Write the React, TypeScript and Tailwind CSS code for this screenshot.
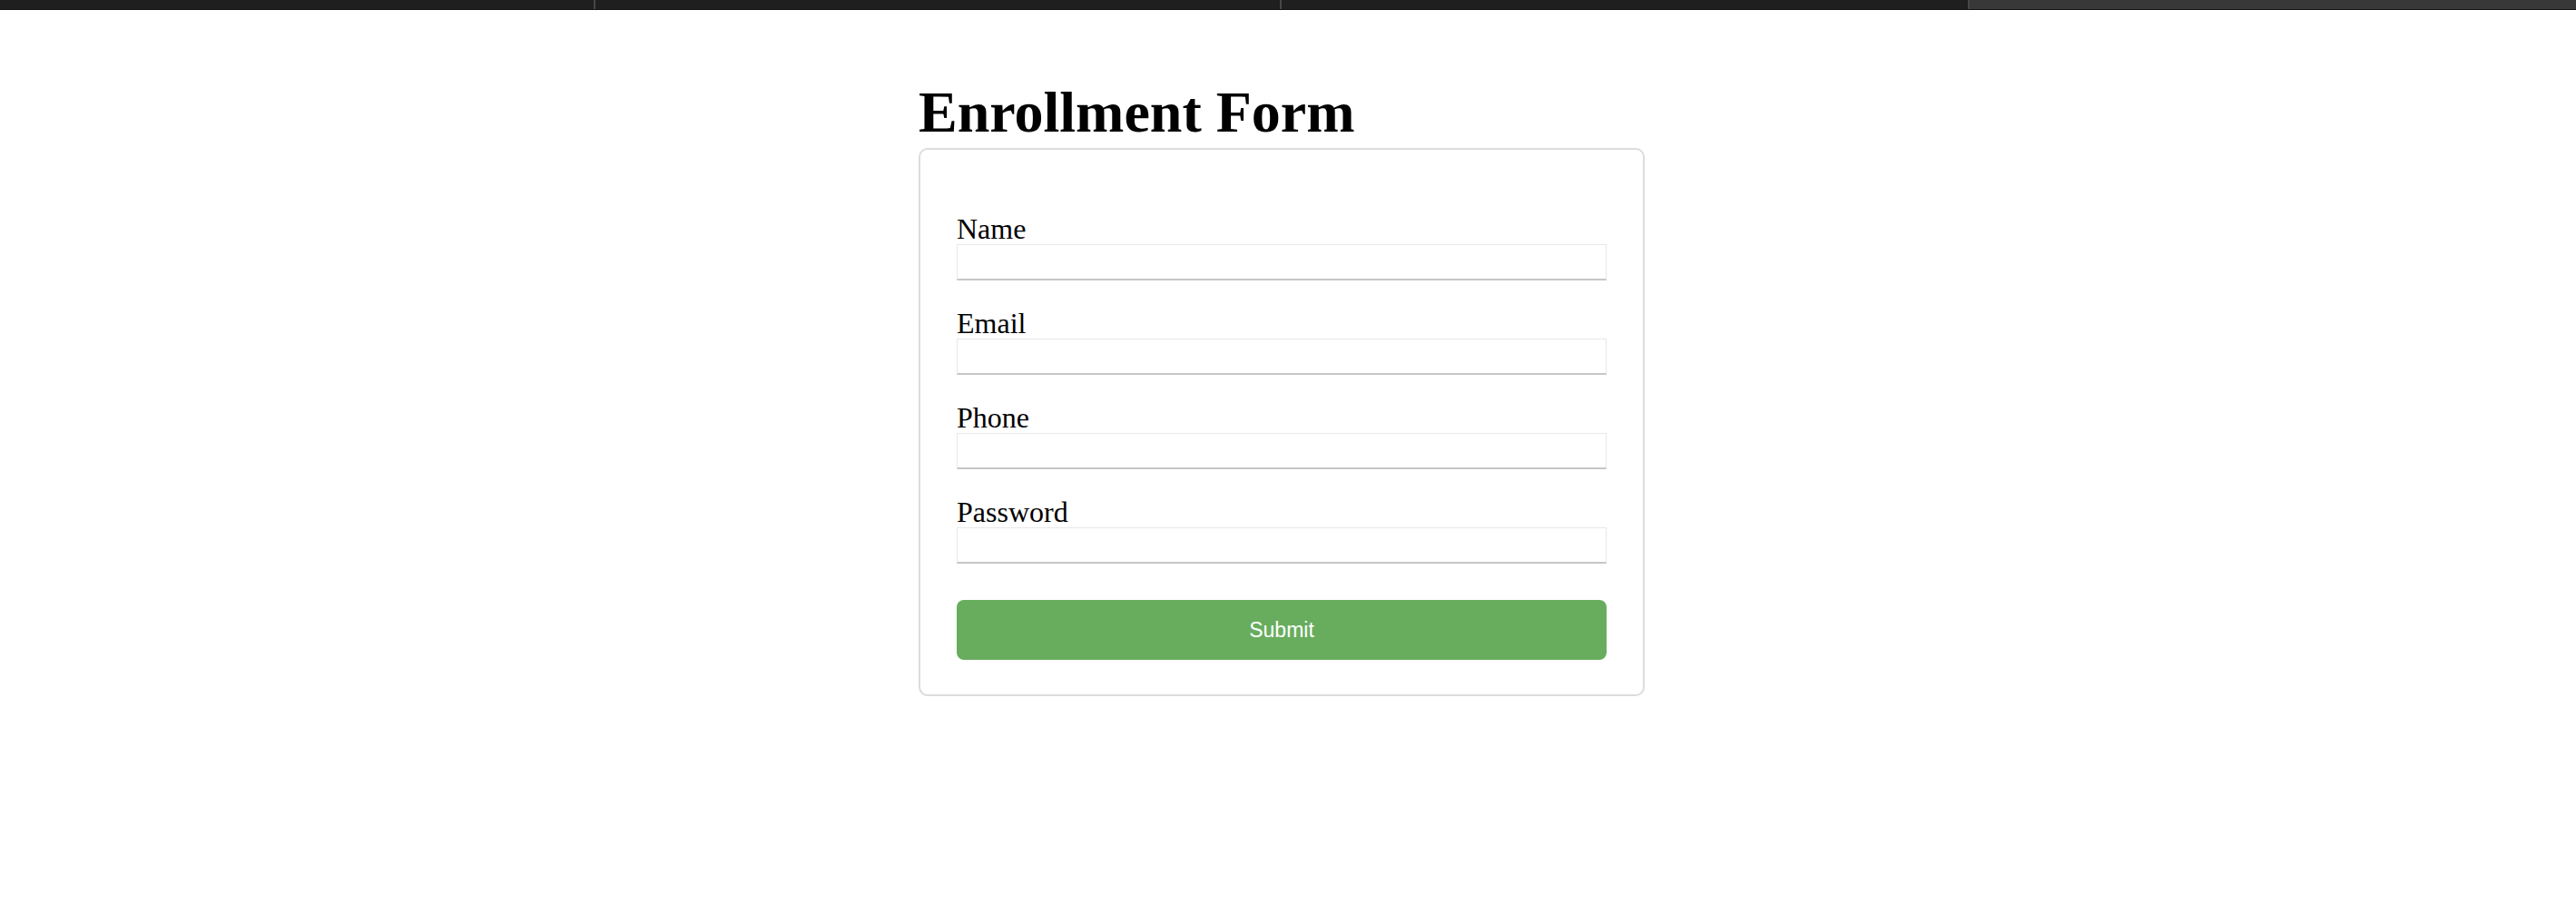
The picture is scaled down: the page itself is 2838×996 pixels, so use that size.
import React from "react";

const fields = ["Name", "Email", "Phone", "Password"];

export default function App() {
  return (
    <div className="min-h-[996px] bg-white" style={{ fontFamily: '"Liberation Serif", "Times New Roman", serif' }}>
      <div className="flex h-[11px] border-b border-[#111111]">
        <div className="w-[654px] bg-[#1f1f1f]" />
        <div className="w-[2px] bg-[#474747]" />
        <div className="w-[754px] bg-[#1f1f1f]" />
        <div className="w-[2px] bg-[#474747]" />
        <div className="w-[756px] bg-[#1f1f1f]" />
        <div className="w-[2px] bg-[#474747]" />
        <div className="flex-1 bg-[#383838]" />
      </div>
      <div className="flex justify-center pr-[14px]">
        <div className="w-[800px]">
          <h1 className="mt-[81px] h-[64px] text-[64px] font-bold leading-[64px] text-black">Enrollment Form</h1>
          <form className="mt-[7px] rounded-[10px] border-2 border-[#dcdcdc] px-[40px] pt-[70px] pb-[38px]">
            <div className="flex flex-col gap-[30px]">
              {fields.map((f) => (
                <div key={f} className="flex flex-col">
                  <label className="block h-[34px] text-[32px] leading-[34px] text-black">{f}</label>
                  <input
                    type={f === "Password" ? "password" : "text"}
                    className="block h-[40px] w-full border border-b-2 border-[#e8e8e8] border-b-[#c6c6c6] bg-white outline-none"
                  />
                </div>
              ))}
            </div>
            <button
              type="button"
              className="mt-[40px] flex h-[66px] w-full items-center justify-center rounded-[8px] bg-[#68ad5e] text-[23px] text-white"
              style={{ fontFamily: '"Liberation Sans", Arial, sans-serif' }}
            >
              Submit
            </button>
          </form>
        </div>
      </div>
    </div>
  );
}
